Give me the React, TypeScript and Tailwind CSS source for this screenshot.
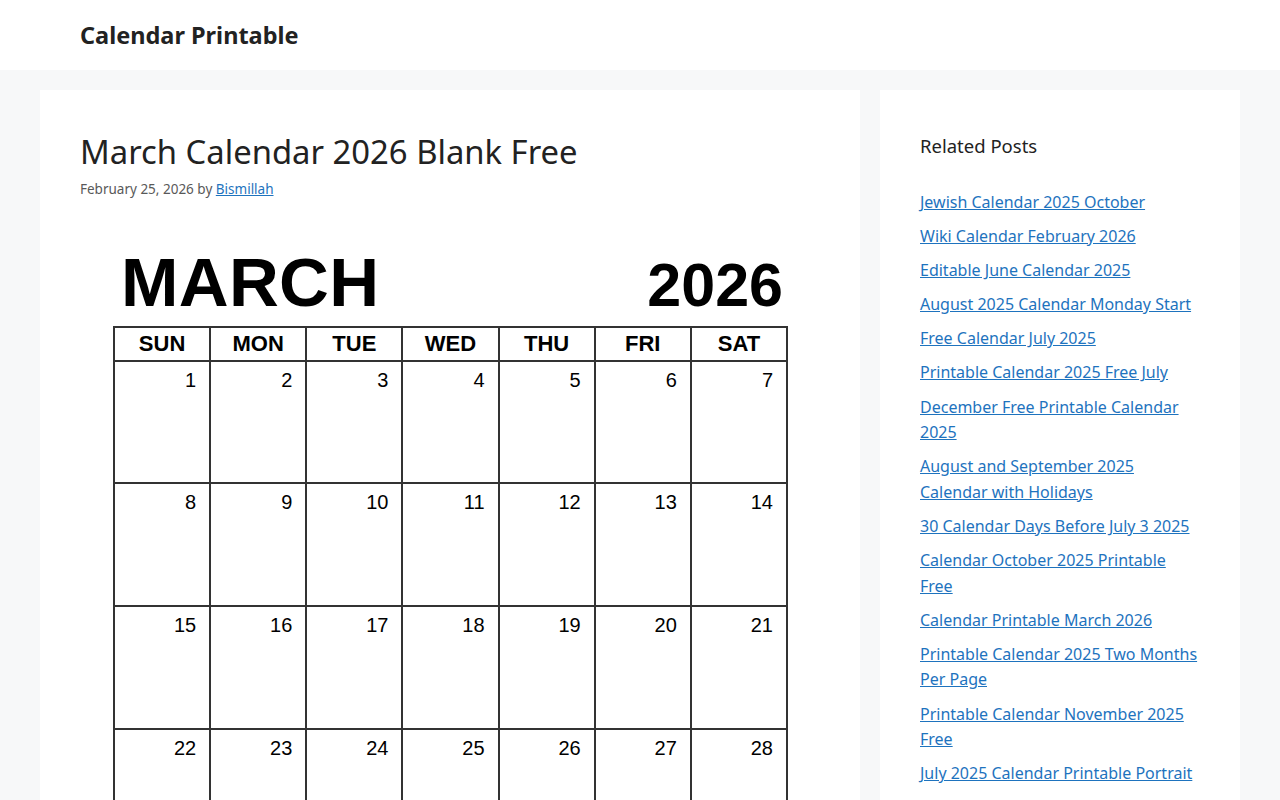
import React from 'react';

const links = [
  'Jewish Calendar 2025 October',
  'Wiki Calendar February 2026',
  'Editable June Calendar 2025',
  'August 2025 Calendar Monday Start',
  'Free Calendar July 2025',
  'Printable Calendar 2025 Free July',
  'December Free Printable Calendar 2025',
  'August and September 2025 Calendar with Holidays',
  '30 Calendar Days Before July 3 2025',
  'Calendar October 2025 Printable Free',
  'Calendar Printable March 2026',
  'Printable Calendar 2025 Two Months Per Page',
  'Printable Calendar November 2025 Free',
  'July 2025 Calendar Printable Portrait',
];

const days = ['SUN', 'MON', 'TUE', 'WED', 'THU', 'FRI', 'SAT'];

function CalendarImage() {
  const cells: (number | null)[] = [];
  for (let i = 1; i <= 35; i++) cells.push(i <= 31 ? i : null);
  return (
    <div className="pl-[33px] pr-[32px] pt-[28px] pb-8 bg-white" style={{ fontFamily: '"Liberation Sans", Arial, sans-serif' }}>
      <div className="flex items-baseline justify-between pl-[8px] pr-[5px]">
        <span className="text-[69px] font-bold leading-none text-black tracking-[0.3px]">MARCH</span>
        <span className="text-[61px] font-bold leading-none text-black">2026</span>
      </div>
      <div className="mt-[9px] grid grid-cols-7 border-l-2 border-t-2 border-[#333]">
        {days.map((d) => (
          <div key={d} className="h-[34px] border-r-2 border-b-2 border-[#333] flex items-center justify-center text-[22px] font-bold text-black">
            {d}
          </div>
        ))}
        {cells.map((c, i) => (
          <div key={i} className="h-[122.7px] border-r-2 border-b-2 border-[#333] flex justify-end pr-[13px] pt-[3px] text-[20px] text-black">
            {c}
          </div>
        ))}
      </div>
    </div>
  );
}

export default function App() {
  return (
    <div className="min-h-screen bg-[#f7f8f9] text-[#222]" style={{ fontFamily: '"Noto Sans", sans-serif' }}>
      <header className="bg-white h-[70px] flex items-center px-20">
        <span className="text-[23.5px] font-bold text-[#222] mt-[2px]">Calendar Printable</span>
      </header>
      <div className="max-w-[1200px] mx-auto pt-5 flex gap-5 items-start">
        <main className="w-[820px] bg-white px-10 pt-[42px]">
          <h1 className="text-[32.8px] leading-[1.2] font-normal text-[#222]">March Calendar 2026 Blank Free</h1>
          <p className="mt-[8px] text-[13.5px] leading-[1.5] text-[#595959]">
            February 25, 2026 by{' '}
            <a href="#" className="text-[#1e73be] underline">Bismillah</a>
          </p>
          <div className="mt-[20px]">
            <CalendarImage />
          </div>
        </main>
        <aside className="w-[360px] bg-white px-10 pt-[40px] pb-10">
          <h2 className="text-[18.5px] font-normal text-[#222] leading-[32px]">Related Posts</h2>
          <ul className="mt-[28px]">
            {links.map((l) => (
              <li key={l} className="mb-[8.5px] text-[16px] leading-[25.6px]">
                <a href="#" className="text-[#1e73be] underline">{l}</a>
              </li>
            ))}
          </ul>
        </aside>
      </div>
    </div>
  );
}
